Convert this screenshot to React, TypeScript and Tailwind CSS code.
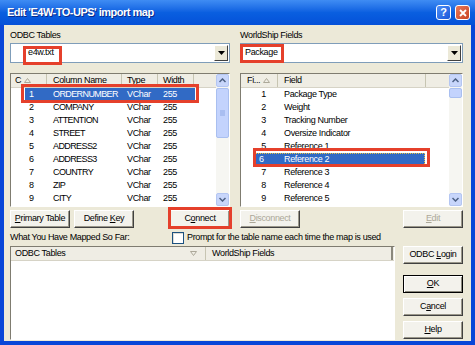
const leftRows = [
  ["1", "ORDERNUMBER"],
  ["2", "COMPANY"],
  ["3", "ATTENTION"],
  ["4", "STREET"],
  ["5", "ADDRESS2"],
  ["6", "ADDRESS3"],
  ["7", "COUNTRY"],
  ["8", "ZIP"],
  ["9", "CITY"],
];

const rightRows = [
  "Package Type",
  "Weight",
  "Tracking Number",
  "Oversize Indicator",
  "Reference 1",
  "Reference 2",
  "Reference 3",
  "Reference 4",
  "Reference 5",
];

function Btn({
  children,
  disabled,
  isDefault,
  className = "",
}: {
  children: React.ReactNode;
  disabled?: boolean;
  isDefault?: boolean;
  className?: string;
}) {
  return (
    <div
      className={`h-[18px] w-[60px] flex items-center justify-center bg-[#f3f2ec] ${
        isDefault
          ? "border border-black shadow-[inset_1px_1px_0_#fff,inset_-1px_-1px_0_#8a887c]"
          : "border border-t-white border-l-white border-r-[#404040] border-b-[#404040] shadow-[inset_-1px_-1px_0_#9a978a]"
      } ${disabled ? "text-[#aca899]" : "text-black"} ${className}`}
    >
      {children}
    </div>
  );
}

function RedBox({ className }: { className: string }) {
  return <div className={`absolute border-[3px] border-[#e5402b] pointer-events-none ${className}`} />;
}

function ScrollBar({ thumbTop, thumbH }: { thumbTop: number; thumbH: number }) {
  return (
    <div className="w-[13px] h-full bg-[#f6f6f2] relative flex flex-col justify-between">
      <div className="h-[13px] bg-[#c8d6fb] border border-[#b4c6f2] rounded-[2px] flex items-center justify-center">
        <svg width="7" height="5" viewBox="0 0 7 5">
          <path d="M0.5 4 L3.5 1 L6.5 4" stroke="#4d6185" strokeWidth="1.5" fill="none" />
        </svg>
      </div>
      <div
        className="absolute left-0 w-[13px] bg-[#c3d3fd] border border-[#a9bff0] rounded-[2px]"
        style={{ top: thumbTop, height: thumbH }}
      >
        {thumbH > 20 && (
          <div className="absolute left-[3px] top-1/2 -translate-y-1/2 w-[5px] flex flex-col gap-[1px]">
            <div className="h-px bg-[#8fa9e6]" />
            <div className="h-px bg-[#8fa9e6]" />
            <div className="h-px bg-[#8fa9e6]" />
          </div>
        )}
      </div>
      <div className="h-[13px] bg-[#c8d6fb] border border-[#b4c6f2] rounded-[2px] flex items-center justify-center">
        <svg width="7" height="5" viewBox="0 0 7 5">
          <path d="M0.5 1 L3.5 4 L6.5 1" stroke="#4d6185" strokeWidth="1.5" fill="none" />
        </svg>
      </div>
    </div>
  );
}

function SortArrow({ down }: { down?: boolean }) {
  return (
    <svg width="7" height="5" viewBox="0 0 7 5" className="ml-[3px]">
      <path d={down ? "M0.5 0.5 L6.5 0.5 L3.5 4.5 Z" : "M0.5 4.5 L6.5 4.5 L3.5 0.5 Z"} fill="none" stroke="#aca899" />
    </svg>
  );
}

function Combo({ value, indent }: { value: string; indent: string }) {
  return (
    <div className="h-[20px] bg-white border border-[#7f9db9] flex items-center">
      <div className={`flex-1 ${indent}`}>{value}</div>
      <div className="w-[14px] h-[16px] mr-[1px] bg-[#ece9d8] border border-t-white border-l-white border-r-[#404040] border-b-[#404040] flex items-center justify-center">
        <svg width="7" height="4" viewBox="0 0 7 4">
          <path d="M0 0 L7 0 L3.5 4 Z" fill="#000" />
        </svg>
      </div>
    </div>
  );
}

export default function App() {
  return (
    <div className="w-[475px] h-[345px] bg-[#0846d8] flex flex-col font-['Liberation_Sans',Arial,sans-serif] text-[9px] tracking-[-0.35px] text-black overflow-hidden">
      {/* title bar */}
      <div className="h-[25px] shrink-0 bg-gradient-to-b from-[#3f8cf3] via-[#0a5fe0] to-[#0550d8] flex items-center pl-[7px] pr-[5px]">
        <div className="flex-1 text-white font-bold text-[11px] tracking-[-0.5px] [text-shadow:1px_1px_0_#0a2a8a]">
          Edit 'E4W-TO-UPS' import map
        </div>
        <div className="w-[15px] h-[15px] rounded-[3px] border border-white bg-gradient-to-br from-[#4d8ef7] to-[#1a56d8] text-white font-bold text-[11px] flex items-center justify-center">
          ?
        </div>
        <div className="w-[15px] h-[15px] ml-[4px] rounded-[3px] border border-white bg-gradient-to-br from-[#e8795a] to-[#c8401e] flex items-center justify-center">
          <svg width="8" height="8" viewBox="0 0 8 8">
            <path d="M1 1 L7 7 M7 1 L1 7" stroke="#fff" strokeWidth="1.8" />
          </svg>
        </div>
      </div>

      {/* body */}
      <div className="flex-1 mx-[4px] mb-[4px] bg-[#ece9d8] pl-[6px] pr-[8px] pt-[4px] flex flex-col">
        <div className="flex gap-[10px]">
          {/* left column */}
          <div className="w-[220px] flex flex-col">
            <div className="h-[12px] leading-[12px]">ODBC Tables</div>
            <div className="relative mt-[2px]">
              <Combo value="e4w.txt" indent="pl-[17px]" />
              <RedBox className="left-[13px] top-[3px] w-[39px] h-[19px]" />
            </div>
            <div className="relative mt-[10px] h-[134px] bg-white border border-t-[#7f7c70] border-l-[#7f7c70] border-r-white border-b-white flex">
              <div className="flex-1 flex flex-col overflow-hidden">
                <div className="h-[14px] shrink-0 flex bg-[#efede4] border-b border-[#d6d3c6]">
                  <div className="w-[36px] pl-[4px] flex items-center border-r border-[#c7c5b2]">
                    C<SortArrow />
                  </div>
                  <div className="w-[75px] pl-[6px] flex items-center border-r border-[#c7c5b2]">Column Name</div>
                  <div className="w-[36px] pl-[5px] flex items-center border-r border-[#c7c5b2]">Type</div>
                  <div className="w-[36px] pl-[5px] flex items-center border-r border-[#c7c5b2]">Width</div>
                  <div className="flex-1" />
                </div>
                {leftRows.map(([n, name], i) => (
                  <div
                    key={n}
                    className={`h-[13px] shrink-0 ml-[14px] w-[170px] flex items-center ${
                      i === 0 ? "bg-[#316ac5] text-white" : ""
                    }`}
                  >
                    <div className="w-[22px] pl-[4px]">{n}</div>
                    <div className="w-[75px] pl-[6px] tracking-[-0.6px] whitespace-nowrap">{name}</div>
                    <div className="w-[36px] pl-[5px]">VChar</div>
                    <div className="w-[36px] pl-[5px]">255</div>
                  </div>
                ))}
              </div>
              <ScrollBar thumbTop={14} thumbH={50} />
              <RedBox className="left-[10px] top-[10px] w-[178px] h-[19px]" />
            </div>
          </div>

          {/* right column */}
          <div className="w-[223px] flex flex-col">
            <div className="h-[12px] leading-[12px]">WorldShip Fields</div>
            <div className="relative mt-[2px]">
              <Combo value="Package" indent="pl-[4px]" />
              <RedBox className="left-0 top-[1px] w-[44px] h-[19px]" />
            </div>
            <div className="relative mt-[10px] h-[134px] bg-white border border-t-[#7f7c70] border-l-[#7f7c70] border-r-white border-b-white flex">
              <div className="flex-1 flex flex-col overflow-hidden">
                <div className="h-[14px] shrink-0 flex bg-[#efede4] border-b border-[#d6d3c6]">
                  <div className="w-[37px] pl-[6px] flex items-center border-r border-[#c7c5b2]">
                    Fi...<SortArrow />
                  </div>
                  <div className="w-[148px] pl-[6px] flex items-center border-r border-[#c7c5b2]">Field</div>
                  <div className="flex-1" />
                </div>
                {rightRows.map((name, i) => (
                  <div
                    key={name}
                    className={`h-[13px] shrink-0 ml-[14px] w-[170px] flex items-center ${
                      i === 5 ? "bg-[#316ac5] text-white outline outline-1 outline-dotted outline-[#f0c040] -outline-offset-1" : ""
                    }`}
                  >
                    <div className={`w-[23px] ${i === 5 ? "pl-[4px]" : "text-right pr-[12px]"}`}>{i + 1}</div>
                    <div className="w-[147px] pl-[6px]">{name}</div>
                  </div>
                ))}
              </div>
              <ScrollBar thumbTop={14} thumbH={10} />
              <RedBox className="left-[12px] top-[74px] w-[177px] h-[19px]" />
            </div>
          </div>
        </div>

        {/* button row */}
        <div className="flex gap-[10px] mt-[3px]">
          <div className="w-[220px] flex gap-[4px]">
            <Btn>
              <span><u>P</u>rimary Table</span>
            </Btn>
            <Btn>
              <span>Define <u>K</u>ey</span>
            </Btn>
            <div className="relative ml-auto">
              <Btn>
                <span>C<u>o</u>nnect</span>
              </Btn>
              <RedBox className="-left-[2px] -right-[2px] -top-[3px] -bottom-[1px]" />
            </div>
          </div>
          <div className="w-[223px] flex justify-between">
            <Btn disabled>
              <span><u>D</u>isconnect</span>
            </Btn>
            <Btn disabled>
              <span><u>E</u>dit</span>
            </Btn>
          </div>
        </div>

        {/* label row */}
        <div className="h-[14px] mt-[3px] flex items-center">
          <div className="w-[162px]">What You Have Mapped So Far:</div>
          <div className="w-[12px] h-[12px] bg-white border border-[#1c5180] shadow-[inset_1px_1px_0_#dcdbd5]" />
          <div className="ml-[3px]">Prompt for the table name each time the map is used</div>
        </div>

        {/* bottom */}
        <div className="flex gap-[8px] mt-[1px]">
          <div className="w-[385px] h-[94px] bg-white border border-t-[#7f7c70] border-l-[#7f7c70] border-r-white border-b-white">
            <div className="h-[14px] flex bg-[#efede4] border-b border-[#d6d3c6]">
              <div className="w-[195px] pl-[4px] flex items-center justify-between pr-[8px] border-r border-[#c7c5b2]">
                <span>ODBC Tables</span>
                <SortArrow down />
              </div>
              <div className="w-[187px] pl-[6px] flex items-center border-r-2 border-[#8a887c]">WorldShip Fields</div>
            </div>
          </div>
          <div className="w-[60px] flex flex-col">
            <Btn>
              <span>ODBC <u>L</u>ogin</span>
            </Btn>
            <Btn isDefault className="mt-[11px]">
              <span><u>O</u>K</span>
            </Btn>
            <Btn className="mt-[5px]">
              <span>C<u>a</u>ncel</span>
            </Btn>
            <Btn className="mt-[5px]">
              <span><u>H</u>elp</span>
            </Btn>
          </div>
        </div>
      </div>
    </div>
  );
}
